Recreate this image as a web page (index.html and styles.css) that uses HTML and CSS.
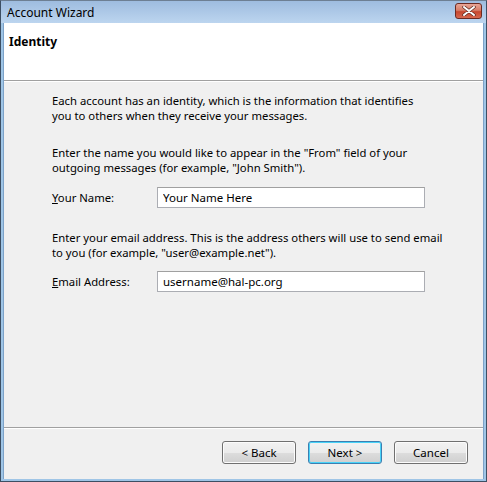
FILE: index.html
```html
<!DOCTYPE html>
<html lang="en">
<head>
  <meta charset="UTF-8" />
  <title>Account Wizard</title>
  <link rel="stylesheet" href="styles.css">
</head>
<body>
  <div class="window">
    <div class="titlebar">
      <span class="title">Account Wizard</span>
      <button class="close-btn" aria-label="Close">
        <svg width="14" height="10" viewBox="0 0 14 10">
          <path d="M2 1 L12 9 M12 1 L2 9" stroke="#5a2a20" stroke-width="3.4" stroke-linecap="round" />
          <path d="M2 1 L12 9 M12 1 L2 9" stroke="#ffffff" stroke-width="2" stroke-linecap="round" />
        </svg>
      </button>
    </div>

    <div class="client">
      <div class="header">
        <h2>Identity</h2>
      </div>

      <div class="content">
        <p>Each account has an identity, which is the information that identifies<br />you to others when they receive your messages.</p>

        <p>Enter the name you would like to appear in the "From" field of your<br />outgoing messages (for example, "John Smith").</p>

        <div class="field">
          <label for="name"><u>Y</u>our Name:</label>
          <input type="text" id="name" value="Your Name Here" />
        </div>

        <p>Enter your email address. This is the address others will use to send email<br />to you (for example, "user@example.net").</p>

        <div class="field field-last">
          <label for="email"><u>E</u>mail Address:</label>
          <input type="text" id="email" value="username@hal-pc.org" />
        </div>
      </div>

      <div class="footer">
        <button class="btn">&lt; Back</button>
        <button class="btn btn-default">Next &gt;</button>
        <button class="btn btn-cancel">Cancel</button>
      </div>
    </div>
  </div>
</body>
</html>
```

FILE: styles.css
```css
* {
  box-sizing: border-box;
}
html, body {
  margin: 0;
  padding: 0;
}
body {
  font-family: "Noto Sans", "Open Sans", sans-serif;
  font-size: 11.3px;
  color: #000;
  background: #f0f0f0;
}
.window {
  width: 487px;
  height: 482px;
  display: flex;
  flex-direction: column;
  border: 1px solid #3d4f63;
  border-top-color: #6d7f93;
  background: #9fc5e6;
  padding: 0 2px 2px 2px;
}
.titlebar {
  height: 22px;
  flex: none;
  display: flex;
  align-items: center;
  justify-content: space-between;
  padding: 0 4px 0 6px;
  margin: 0 -2px;
  background: linear-gradient(to bottom, #9ebcdf, #bcd5ef);
}
.title {
  font-size: 12px;
  color: #000;
  padding-top: 1px;
}
.close-btn {
  width: 27px;
  height: 16px;
  padding: 0;
  margin-top: -2px;
  border: 1px solid #6b2a22;
  border-radius: 3px;
  background: linear-gradient(to bottom, #e7a596 0%, #d77d68 45%, #c7472e 55%, #d6684f 100%);
  display: flex;
  align-items: center;
  justify-content: center;
}
.client {
  flex: 1;
  display: flex;
  flex-direction: column;
  background: #f0f0f0;
  border-left: 1px solid #7da2c8;
  border-right: 1px solid #7da2c8;
}
.header {
  height: 58px;
  flex: none;
  background: #fff;
  border-bottom: 1px solid #a0a0a0;
  box-shadow: 0 1px 0 #fff;
  padding: 10px 5px;
}
.header h2 {
  margin: 0;
  font-size: 12px;
  font-weight: bold;
}
.content {
  flex: 1;
  padding: 12px 20px 0 48px;
}
.content p {
  margin: 0 0 22px 0;
  line-height: 15px;
  white-space: nowrap;
}
.field {
  display: flex;
  align-items: center;
  margin: -10px 0 22px 0;
}
.field-last {
  margin-top: -11px;
}
.field label {
  width: 105px;
}
.field input {
  width: 268px;
  height: 21px;
  border: 1px solid #abadb3;
  border-top-color: #a0a0a0;
  padding: 0 5px;
  font-family: inherit;
  font-size: 11.5px;
  background: #fff;
}
.footer {
  height: 52px;
  flex: none;
  border-top: 1px solid #a0a0a0;
  box-shadow: inset 0 1px 0 #fff;
  display: flex;
  justify-content: flex-end;
  align-items: flex-start;
  gap: 12px;
  padding: 13px 15px 0 0;
}
.btn {
  width: 74px;
  height: 23px;
  font-family: inherit;
  font-size: 11.5px;
  border: 1px solid #707070;
  border-radius: 3px;
  background: linear-gradient(to bottom, #f2f2f2 0%, #ebebeb 50%, #dddddd 51%, #cfcfcf 100%);
  box-shadow: inset 0 0 0 1px #fcfcfc;
  padding: 0;
}
.btn-default {
  border-color: #3c7fb1;
  box-shadow: inset 0 0 0 1px #48d3f8;
}
```
